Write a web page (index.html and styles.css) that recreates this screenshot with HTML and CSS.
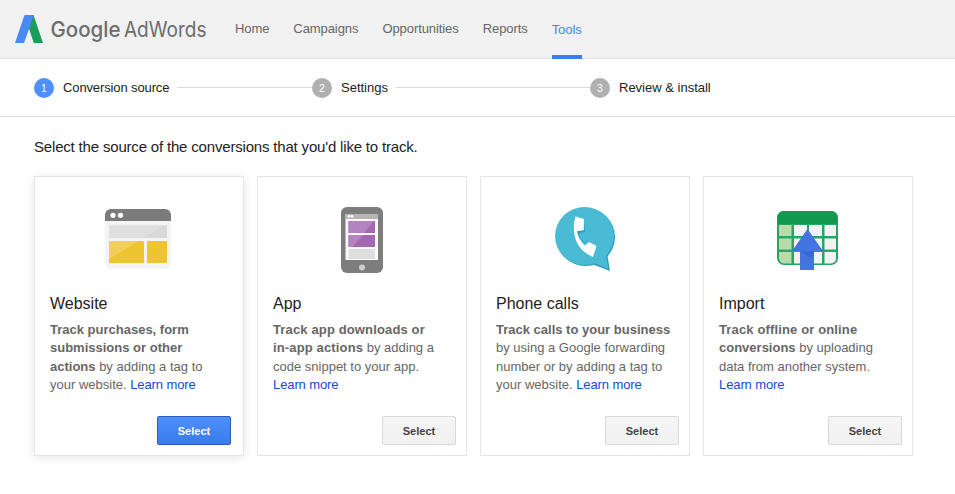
FILE: index.html
```html
<!DOCTYPE html>
<html lang="en">
<head>
<meta charset="utf-8">
<title>Google AdWords - Conversion source</title>
<link rel="stylesheet" href="styles.css">
</head>
<body>
<header class="topbar">
  <svg class="brand" width="210" height="58" viewBox="0 0 210 58" role="img" aria-label="Google AdWords">
    <path class="logo-green" d="M20 15h6.500L36 43h-9.200L21.800 28z"/>
    <path class="logo-blue" d="M17.500 15H27L17 43H8z"/>
    <text class="word google" x="43.500" y="36.500" textLength="70" lengthAdjust="spacingAndGlyphs">Google</text>
    <text class="word" x="117" y="36.500" textLength="82.500" lengthAdjust="spacingAndGlyphs">AdWords</text>
  </svg>
  <nav class="nav">
    <a>Home</a><a>Campaigns</a><a>Opportunities</a><a>Reports</a><a class="active">Tools</a>
  </nav>
</header>
<ol class="steps">
  <li class="step current"><span class="dot">1</span><span class="label">Conversion source</span><i></i></li>
  <li class="step"><span class="dot">2</span><span>Settings</span><i></i></li>
  <li class="step"><span class="dot">3</span><span>Review &amp; install</span></li>
</ol>
<main>
  <p class="intro">Select the source of the conversions that you'd like to track.</p>
  <div class="cards">
    <section class="card selected">
      <svg class="icon" width="90" height="90" viewBox="0 0 90 90">
        <rect x="12" y="14" width="66" height="60" rx="6" fill="#f4f4f4"/>
        <path d="M12 26v-6a6 6 0 0 1 6-6h54a6 6 0 0 1 6 6v6z" fill="#7b7b7b"/>
        <circle cx="20" cy="20.300" r="2.600" fill="#fff"/><circle cx="27.500" cy="20.300" r="2.600" fill="#fff"/>
        <path d="M16 30h58v13H16z" fill="#d9d9d9"/><path d="M16 30h54L50 43H16z" fill="#dfdfdf"/>
        <path d="M16 46h35v22H16zM54 46h20v22H54z" fill="#edc531"/><path d="M16 46h30L16 64z" fill="#f0d05b"/>
      </svg>
      <h2>Website</h2>
      <p class="desc"><b>Track purchases, form<br>submissions or other<br>actions</b> by adding a tag to<br>your website. <a>Learn more</a></p>
      <button class="select primary">Select</button>
    </section>
    <section class="card">
      <svg class="icon" width="90" height="90" viewBox="0 0 90 90">
        <rect x="25" y="12" width="42" height="66" rx="6" fill="#7d7d7d"/>
        <path d="M29.500 19h32.500v46H29.500z" fill="#fafafa"/><path d="M29.500 19h32.500v5H29.500z" fill="#b5b5b5"/>
        <circle cx="33" cy="21.300" r="1.400" fill="#fff"/><circle cx="36" cy="21.300" r="1.400" fill="#fff"/>
        <path d="M32.500 26H59v12H32.500zM32.500 40H59v12H32.500z" fill="#a269b1"/>
        <path d="M32.500 26H58L48 38H32.500zM32.500 40H47L36.500 52h-4z" fill="#b483c0"/>
        <path d="M32.500 54H59v10H32.500z" fill="#dedede"/><circle cx="46" cy="72.500" r="3" fill="#cecece"/>
      </svg>
      <h2>App</h2>
      <p class="desc"><b class="wide">Track app downloads or<br>in-app actions</b> by adding a<br>code snippet to your app.<br><a>Learn more</a></p>
      <button class="select">Select</button>
    </section>
    <section class="card">
      <svg class="icon" width="90" height="90" viewBox="0 0 90 90">
        <path d="M53 69L71 76 68.500 61z" fill="#269eb6"/>
        <ellipse cx="46.500" cy="42" rx="29.500" ry="29" fill="#269eb6"/>
        <ellipse cx="45.500" cy="41" rx="29.500" ry="29" fill="#49bbd5"/>
        <path d="M55 68L69.500 74 67 60 60 58z" fill="#49bbd5"/>
        <g transform="translate(1 0)">
          <path d="M36 36.500L44 35l.2-9L45 37l-6 1q3 9 7.500 12z" fill="#269eb6"/>
          <path d="M35.500 21.500L44 24l-.3 11.300-6.700.9q1.500 9 8 14.300l4-3.500 7.500 4L53 62Q32 53 34 28z" fill="#fff"/>
        </g>
      </svg>
      <h2>Phone calls</h2>
      <p class="desc"><b>Track calls to your business</b><br>by using a Google forwarding<br>number or by adding a tag to<br>your website. <a>Learn more</a></p>
      <button class="select">Select</button>
    </section>
    <section class="card">
      <svg class="icon" width="90" height="90" viewBox="0 0 90 90">
        <rect x="15" y="16" width="61" height="54" rx="7" fill="#27a567"/>
        <path d="M15 29v-6a7 7 0 0 1 7-7h47a7 7 0 0 1 7 7v6z" fill="#10994f"/>
        <path d="M17 30h12.500v11H17zM17 43.500h12.500v11H17zM17 57h12.500v11.500H22a5 5 0 0 1-5-5z" fill="#b9dbaa"/>
        <path d="M32 30h13v11H32zM47 30h13v11H47zM62.500 30H74v11H62.500zM32 43.500h13v11H32zM47 43.500h13v11H47zM62.500 43.500H74v11H62.500zM32 57h13v11.500H32zM47 57h13v11.500H47zM62.500 57H74v6.500a5 5 0 0 1-5 5h-6.500z" fill="#f2f2f2"/>
        <path d="M45.500 34L61 56H52v19H38V56H30z" fill="#4374e0"/><path d="M38 56h14v4l-4 3z" fill="#3b68cd"/>
      </svg>
      <h2>Import</h2>
      <p class="desc"><b><span class="wide">Track offline or online</span><br>conversions</b> by uploading<br>data from another system.<br><a>Learn more</a></p>
      <button class="select">Select</button>
    </section>
  </div>
</main>
</body>
</html>
```
FILE: styles.css
```css
* { box-sizing: border-box; }
body { margin: 0; min-height: 494px; background: #fff; font-family: "Liberation Sans", Arial, sans-serif; color: #222; }
.topbar { display: flex; height: 59px; padding-left: 7px; background: #f1f1f1; border-bottom: 1px solid #e2e2e2; }
.brand { flex: none; margin-right: 18px; }
.logo-blue { fill: #4a8af4; }
.logo-green { fill: #1b9c5a; }
.word { font-family: Inter, sans-serif; font-size: 21px; fill: #6c6c6c; }
.google { font-weight: 500; }
.nav { display: flex; gap: 24px; height: 59px; font-size: 13px; line-height: 58px; color: #666; letter-spacing: -.08px; }
.nav .active { height: 59px; line-height: 60px; color: #4285f4; border-bottom: 4px solid #3b7ded; }
.steps { display: flex; height: 58px; margin: 0; padding: 0 0 0 34px; list-style: none; border-bottom: 1px solid #d9d9d9; font-size: 13px; }
.step { display: flex; align-items: center; width: 278px; white-space: nowrap; }
.label { letter-spacing: -.12px; }
.dot { width: 20px; height: 20px; margin-right: 9px; border-radius: 50%; background: #b0b0b0; color: #fff; font-size: 10.500px; line-height: 21px; text-align: center; }
.current .dot { background: #4d90fe; }
.step i { flex: 1; height: 1px; margin-left: 8px; background: #d9d9d9; }
main { padding: 21px 34px 0; }
.intro { margin: 0 0 21px; font-size: 15px; line-height: 17px; letter-spacing: -.18px; }
.cards { display: flex; gap: 13px; }
.card { display: flex; flex-direction: column; width: 210px; height: 280px; padding: 18px 10px 10px 15px; border: 1px solid #e5e5e5; }
.card.selected { padding-right: 12px; box-shadow: 0 2px 10px rgba(0, 0, 0, .1); }
.icon { display: block; margin-left: 43px; }
.card h2 { margin: 9px 0 7px; font-size: 16px; font-weight: 400; line-height: 20px; }
.desc { margin: 0; font-size: 13px; line-height: 18.400px; color: #666; white-space: nowrap; }
.wide { letter-spacing: .14px; }
.desc a { color: #114bdc; letter-spacing: -.1px; }
.select { width: 74px; height: 29px; margin: auto 0 0 auto; padding: 0; border: 1px solid #d8d8d8; border-radius: 2px; background: linear-gradient(#f5f5f5, #f1f1f1); color: #444; font: bold 11px "Liberation Sans", Arial, sans-serif; }
.select.primary { border-color: #2f5bb7; background: linear-gradient(#4d90fe, #3a7bea); color: #fff; }
```
